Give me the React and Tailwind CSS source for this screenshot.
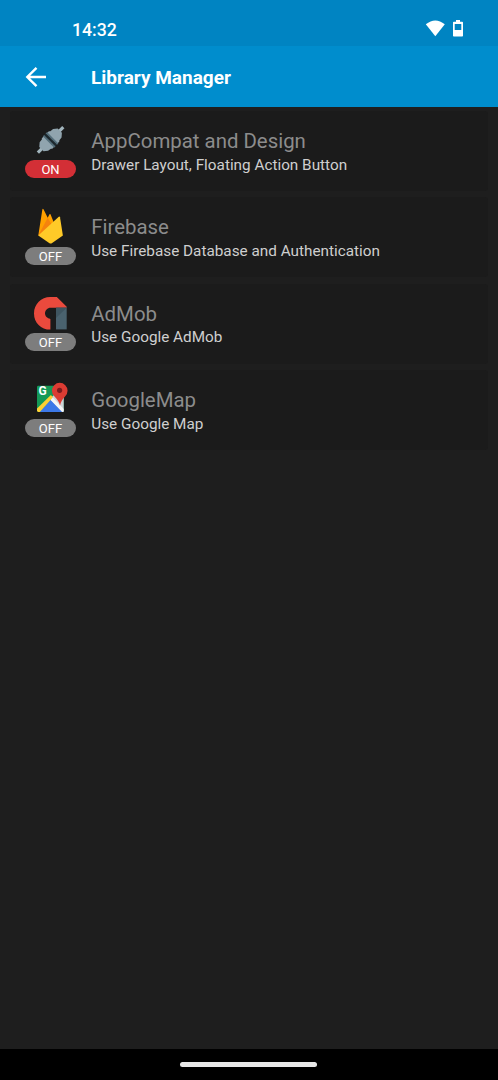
const PlugIcon = () => (
  <svg viewBox="0 0 36 36" className="w-9 h-9">
    <g transform="translate(18.6 17.9) rotate(-45)">
      <path d="M-18 -1.6H18V1.6H-18Z" fill="#a2b5bd" />
      <path d="M-13 -3L-9.5 -6L-6 -6.4L-5 -7.4H-2V7.4H-5L-6 6.4L-9.5 6L-13 3Z" fill="#90a4ae" />
      <path d="M13 -3L9.5 -6L6 -6.4L5 -7.4H2V7.4H5L6 6.4L9.5 6L13 3Z" fill="#90a4ae" />
      <path d="M-3 -8H-0.8V8H-3ZM0.8 -8H3V8H0.8Z" fill="#546e7a" />
      <path d="M-1.2 -7.6H1.2V7.6H-1.2Z" fill="#1d292f" />
    </g>
  </svg>
);

const FirebaseIcon = () => (
  <svg viewBox="0 0 36 36" className="w-9 h-9">
    <path d="M6.3 27.4L10.4 1.2Q10.9 .3 11.5 1.2L15.7 9.8L17.5 6.3Q18 5.6 18.5 6.3L24 20Z" fill="#ffa000" />
    <path d="M6.3 27.4L15.7 9.8L20.5 18Z" fill="#f5820d" />
    <path d="M6.3 27.4L26.8 8.8Q27.7 8.1 28 9.2L30.9 27.4L19.8 35.2Q18.7 35.9 17.5 35.2Z" fill="#ffca28" />
  </svg>
);

const AdMobIcon = () => (
  <svg viewBox="0 0 36 36" className="w-9 h-9">
    <path d="M18.4 34.6C9 34.6 2 27.8 2 18.4C2 9.2 9.2 2 18.2 2H24.8L34.7 11.8V12.7H18.6C15.5 12.7 13 15.2 13 18.3C13 21.2 15.2 23.4 18.4 23.9Z" fill="#ea4a3d" />
    <path d="M24 12.7H34.7V34.4H24Z" fill="#4a626e" />
    <path d="M24 12.7H34.7L24 23Z" fill="#3f5560" />
  </svg>
);

const MapIcon = () => (
  <svg viewBox="0 0 36 36" className="w-9 h-9">
    <path d="M6.4 4.7H31.7V29.6Q31.7 31 30.3 31H6.4Q5 31 5 29.6V6.1Q5 4.7 6.4 4.7Z" fill="#159957" />
    <path d="M18.6 17.2L31.7 4.7V31H20Z" fill="#d0d4d8" />
    <path d="M7.5 31L18.6 18.8L30.3 31Z" fill="#3c78e8" />
    <path d="M5 27.6L18.9 14L21 16.2L7.8 31H6.4Q5 31 5 29.6Z" fill="#fdd033" />
    <path d="M18.6 18.9L20.8 16.6L31.7 28V29.6Q31.7 31 30.3 31Z" fill="#f4f5f6" />
    <text x="6.6" y="14.3" fill="#fff" fontSize="12" fontWeight="700" fontFamily="Roboto, sans-serif">G</text>
    <path d="M28 24.6C27.3 20.8 25.2 18.6 22.3 15.2A7.8 7.8 0 1 1 33.2 15.2C30.4 18.6 28.7 20.8 28 24.6Z" fill="#dc3c33" />
    <circle cx="27.6" cy="9.3" r="2.6" fill="#7b1b1d" />
  </svg>
);

const libraries = [
  {
    icon: <PlugIcon />,
    title: "AppCompat and Design",
    description: "Drawer Layout, Floating Action Button",
    enabled: true
  },
  {
    icon: <FirebaseIcon />,
    title: "Firebase",
    description: "Use Firebase Database and Authentication",
    enabled: false
  },
  {
    icon: <AdMobIcon />,
    title: "AdMob",
    description: "Use Google AdMob",
    enabled: false
  },
  {
    icon: <MapIcon />,
    title: "GoogleMap",
    description: "Use Google Map",
    enabled: false
  }
];

export default function App() {
  return (
    <div className="h-screen flex flex-col bg-[#1e1e1e] font-['Roboto',sans-serif] overflow-hidden">
      {/* Status bar */}
      <div className="h-[46px] shrink-0 bg-[#0084c2] flex items-start justify-between pl-[72px] pr-[35px] pt-[19px] text-white">
        <span className="text-[17.7px] leading-[22px] font-medium">14:32</span>
        <div className="flex gap-2 pt-px">
          <svg viewBox="0 0 20 17" className="w-5 h-[17px]">
            <path d="M.8 4.2Q10.3 -3.4 19.8 4.2L10.3 16.2Z" fill="currentColor" />
          </svg>
          <svg viewBox="0 0 10 17" className="w-2.5 h-[17px]">
            <path fillRule="evenodd" d="M3 0H7V1.7H9.2Q10 1.7 10 2.5V15.8Q10 16.6 9.2 16.6H.8Q0 16.6 0 15.8V2.5Q0 1.7 .8 1.7H3ZM1.7 4V10H8.3V4Z" fill="currentColor" />
          </svg>
        </div>
      </div>

      {/* Toolbar */}
      <header className="h-[61px] shrink-0 bg-[#008dcd] flex items-center pl-[25px] text-white">
        <svg viewBox="0 0 22 22" className="w-[22px] h-[22px]" fill="none" stroke="currentColor" strokeWidth="2.4">
          <path d="M21 11H2.5M11.5 1.8L2.3 11L11.5 20.2" />
        </svg>
        <h1 className="ml-[44px] pt-0.5 text-[19px] leading-6 font-bold">Library Manager</h1>
      </header>

      {/* Library list */}
      <main className="flex-1 flex flex-col gap-[6.33px] px-2.5 pt-1">
        {libraries.map((library) => (
          <div key={library.title} className="h-20 shrink-0 flex rounded-[3px] bg-[#1b1b1b]">
            <div className="w-[51px] ml-[15px] pt-[11px] flex flex-col items-center">
              <div className="ml-[-1px]">{library.icon}</div>
              <span
                className={`mt-[2.4px] w-full h-[18px] rounded-full text-center text-[13px] leading-[19px] text-white ${library.enabled ? 'bg-[#d32f36]' : 'bg-[#7d7d7d]'}`}
              >
                {library.enabled ? 'ON' : 'OFF'}
              </span>
            </div>
            <div className="ml-[15.3px] pt-[18px]">
              <h2 className="text-[20.4px] leading-6 text-[#8c8c8c]">{library.title}</h2>
              <p className="mt-[0.65px] text-[15.3px] leading-[23px] text-[#cfcfcf]">{library.description}</p>
            </div>
          </div>
        ))}
      </main>

      {/* Navigation bar */}
      <div className="h-[31px] shrink-0 bg-black flex justify-center pt-[13px] pr-px">
        <div className="w-[137px] h-[5px] rounded-full bg-[#e8e8e8]"></div>
      </div>
    </div>
  );
}
